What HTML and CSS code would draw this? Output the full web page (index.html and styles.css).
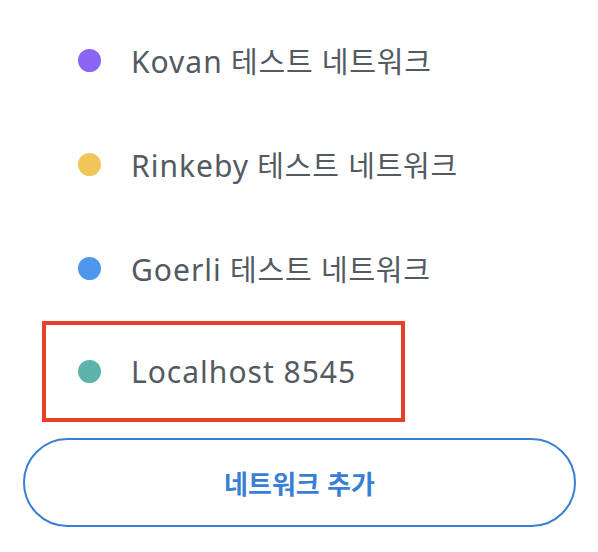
FILE: index.html
```html
<!DOCTYPE html>
<html lang="ko">
<head>
<meta charset="utf-8">
<link rel="stylesheet" href="styles.css">
</head>
<body>
<div class="page">
  <ul class="networks">
    <li class="network"><span class="dot dot-kovan"></span><span class="name"><span class="latin">Kovan</span> 테스트 네트워크</span></li>
    <li class="network"><span class="dot dot-rinkeby"></span><span class="name"><span class="latin">Rinkeby</span> 테스트 네트워크</span></li>
    <li class="network"><span class="dot dot-goerli"></span><span class="name"><span class="latin">Goerli</span> 테스트 네트워크</span></li>
    <li class="network network-highlight"><span class="dot dot-local"></span><span class="name"><span class="latin">Localhost 8545</span></span></li>
  </ul>
  <button class="add-btn">네트워크 추가</button>
</div>
</body>
</html>
```
FILE: styles.css
```css
html, body {
  margin: 0;
  padding: 0;
  background: #ffffff;
}
.page {
  width: 598px;
  height: 552px;
  padding-top: 8px;
  box-sizing: border-box;
  font-family: "Noto Sans", "Noto Sans CJK KR", sans-serif;
}
.networks {
  list-style: none;
  margin: 0;
  padding: 0;
}
.network {
  height: 104px;
  display: flex;
  align-items: center;
  padding-left: 78px;
  box-sizing: border-box;
}
.network-highlight {
  height: 101px;
  margin: 1px 0 2px 42px;
  width: 363px;
  padding-left: 32px;
  border: 4px solid #e8412b;
}
.dot {
  width: 23px;
  height: 23px;
  border-radius: 50%;
  flex: none;
  margin-right: 30px;
}
.dot-kovan { background: #8a64f5; }
.dot-rinkeby { background: #f0c65a; }
.dot-goerli { background: #4e97ec; }
.dot-local { background: #5cb4ac; }
.name {
  font-size: 29px;
  color: #535a61;
  letter-spacing: 0.8px;
}
.latin {
  font-size: 30px;
  letter-spacing: 1px;
}
.add-btn {
  display: block;
  margin: 16px 0 0 23px;
  width: 553px;
  height: 89px;
  border: 2px solid #3b7fd4;
  border-radius: 45px;
  background: #fff;
  color: #3b7fd4;
  font-family: "Noto Sans CJK KR", sans-serif;
  font-size: 26px;
  font-weight: 700;
  padding: 0;
}
```
